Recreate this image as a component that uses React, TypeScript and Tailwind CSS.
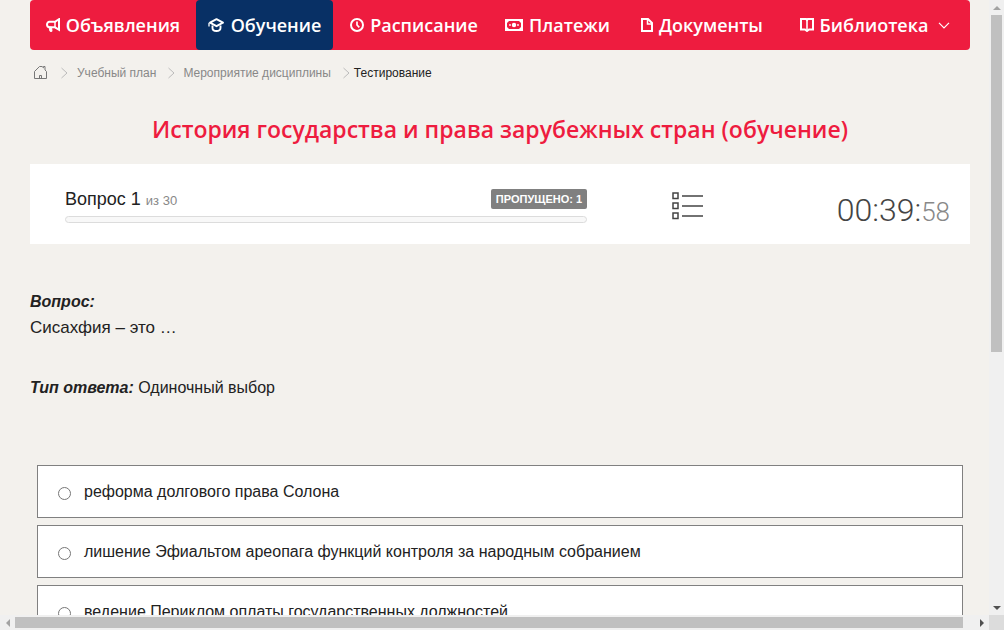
import React from 'react';

type IconProps = { className?: string };

function MegaphoneIcon() {
  return (
    <svg width="14" height="14" viewBox="0 0 14 14" fill="none" stroke="currentColor" strokeWidth="2">
      <path d="M13 1.200v10.600L9 9.300H3.500C2 9.300 1 8.300 1 6.600S2 3.800 3.500 3.800H9z" />
      <path d="M9 3.500v6" strokeWidth="1.500" />
      <path d="M3 9l1 4.300h2L5.500 9z" fill="currentColor" strokeWidth="1" />
    </svg>
  );
}

function GraduationIcon() {
  return (
    <svg width="17" height="14" viewBox="0 0 17 14" fill="none" stroke="currentColor" strokeWidth="1.900">
      <path d="M8.500 1.200L15 4.700 8.500 8.200 2 4.700z" strokeLinejoin="round" />
      <path d="M4.500 7.500v2.500c0 1.800 1.500 3 4 3s4-1.200 4-3V7.500" />
      <path d="M1 4.700v3.800" strokeWidth="1.300" />
    </svg>
  );
}

function ClockIcon() {
  return (
    <svg width="14" height="14" viewBox="0 0 14 14" fill="none" stroke="currentColor" strokeWidth="2">
      <circle cx="7" cy="7" r="6" />
      <path d="M7 3.500V7l2.300 2.300" strokeWidth="1.700" />
    </svg>
  );
}

function MoneyIcon() {
  return (
    <svg width="18" height="12" viewBox="0 0 18 12" fill="currentColor">
      <path fillRule="evenodd" d="M0 0h18v12H0zM4 2 2 4v4l2 2h10l2-2V4l-2-2z" />
      <circle cx="9" cy="6" r="2.200" />
      <circle cx="5" cy="6" r="0.900" />
      <circle cx="13" cy="6" r="0.900" />
    </svg>
  );
}

function DocumentIcon() {
  return (
    <svg width="12" height="14" viewBox="0 0 12 14" fill="none" stroke="currentColor" strokeWidth="2">
      <path d="M1 1h6l4 4v8H1z" />
      <path d="M6.500 1v5H11" strokeWidth="1.500" />
    </svg>
  );
}

function BookIcon() {
  return (
    <svg width="14" height="14" viewBox="0 0 14 14" fill="none" stroke="currentColor" strokeWidth="2">
      <path d="M1 1h5l1 1 1-1h5v10.500H9L7 13l-2-1.500H1z" />
      <path d="M7 2v11" strokeWidth="1.600" />
    </svg>
  );
}

function HomeIcon() {
  return (
    <svg width="13" height="13" viewBox="0 0 13 13" fill="none" stroke="#777" strokeWidth="1">
      <path d="M.5 5.500v7h12V5.500L11 4V.5H9.500v1.300L8 .5H5.500zM5.500 12.500v-3h2v3" />
    </svg>
  );
}

function Chevron({ className }: IconProps) {
  return (
    <svg className={className} width="7" height="12" viewBox="0 0 7 12" fill="none" stroke="#bbb" strokeWidth="1">
      <path d="M.5 1l5.500 5L.5 11" />
    </svg>
  );
}

function DownIcon() {
  return (
    <svg className="ml-1" width="12" height="7" viewBox="0 0 12 7" fill="none" stroke="currentColor" strokeWidth="1.200">
      <path d="M1 .8l5 5 5-5" />
    </svg>
  );
}

function ListIcon() {
  return (
    <svg width="31" height="28" viewBox="0 0 31 28" fill="none" stroke="#444" strokeWidth="1.500">
      <path d="M1 1h5v5.500H1zM1 11h5v5.500H1zM1 21h5v5.500H1zM10 4h21M10 14h21M10 24h21" />
    </svg>
  );
}

const sections = [
  { label: 'Объявления', icon: <MegaphoneIcon /> },
  { label: 'Обучение', icon: <GraduationIcon />, active: true },
  { label: 'Расписание', icon: <ClockIcon /> },
  { label: 'Платежи', icon: <MoneyIcon /> },
  { label: 'Документы', icon: <DocumentIcon /> },
  { label: 'Библиотека', icon: <BookIcon />, menu: true },
];

const answers = [
  'реформа долгового права Солона',
  'лишение Эфиальтом ареопага функций контроля за народным собранием',
  'ведение Периклом оплаты государственных должностей',
];

export default function App() {
  return (
    <div className="grid h-screen grid-cols-[minmax(0,1fr)_15px] grid-rows-[minmax(0,1fr)_15px] bg-[#f3f1ed] font-['Liberation_Sans',Arial,sans-serif] text-[#222]">
      <main className="overflow-hidden pr-[19px] pl-[30px]">
        <nav className="grid h-[50px] grid-cols-[166fr_137fr_162fr_125fr_164fr_182fr_4px] overflow-hidden rounded bg-[#ee1c3f] font-['Open_Sans',sans-serif] text-lg font-semibold text-white">
          {sections.map((s) => (
            <a
              key={s.label}
              href="#"
              className={
                s.active
                  ? 'flex items-center justify-center gap-1.5 rounded bg-[#083065] whitespace-nowrap'
                  : 'flex items-center justify-center gap-1.5 whitespace-nowrap'
              }
            >
              {s.icon}
              <span>{s.label}</span>
              {s.menu && <DownIcon />}
            </a>
          ))}
        </nav>

        <nav className="flex h-[45px] items-center pl-1 text-xs text-[#888]">
          <a href="#" aria-label="Главная">
            <HomeIcon />
          </a>
          <Chevron className="mr-[9px] ml-3.5" />
          <a href="#">Учебный план</a>
          <Chevron className="mr-2 ml-3" />
          <a href="#">Мероприятие дисциплины</a>
          <Chevron className="mr-1 ml-3" />
          <span className="text-[#222]">Тестирование</span>
        </nav>

        <h1 className="mt-4 text-center font-['Open_Sans',sans-serif] text-[23px] leading-9 font-semibold text-[#ee1c3f]">
          История государства и права зарубежных стран (обучение)
        </h1>

        <section className="mt-[17px] flex h-20 bg-white pr-5 pl-[35px]">
          <div className="w-[59%] pt-6">
            <div className="flex h-[22px] items-center justify-between">
              <p className="text-lg">
                Вопрос 1 <span className="text-[13px] text-[#888]">из 30</span>
              </p>
              <span className="rounded-xs bg-[#808080] px-[5px] text-[11px] leading-5 font-bold text-white">
                ПРОПУЩЕНО: 1
              </span>
            </div>
            <div className="mt-1.5 h-[7px] rounded-full border border-[#dcdcdc] bg-[#f8f8f8]" />
          </div>
          <div className="flex flex-1 items-start justify-between pt-7">
            <button type="button" aria-label="Список вопросов" className="ml-[85px]">
              <ListIcon />
            </button>
            <p className="font-['Roboto',sans-serif] text-[32px] leading-9 font-light text-[#444]">
              00:39:<span className="text-[26px] text-[#888]">58</span>
            </p>
          </div>
        </section>

        <section className="mt-[45px] text-base leading-[26px]">
          <h2 className="font-bold italic">Вопрос:</h2>
          <p className="text-[17px]">Сисахфия – это …</p>
          <p className="mt-[34px]">
            <strong className="italic">Тип ответа:</strong> Одиночный выбор
          </p>
        </section>

        <form className="mt-16 flex flex-col gap-[7px] px-[7px]">
          {answers.map((a) => (
            <label key={a} className="flex h-[53px] shrink-0 items-center border border-[#808080] bg-white pl-5 text-base">
              <input type="radio" name="answer" className="mt-1 mr-[13px] size-[13px]" />
              {a}
            </label>
          ))}
        </form>
      </main>

      <div className="flex flex-col items-center bg-[#f0f0f0]" aria-hidden="true">
        <div className="flex h-[15px] items-center">
          <svg width="8" height="4" viewBox="0 0 8 4" fill="#a3a3a3"><path d="M0 4l4-4 4 4z" /></svg>
        </div>
        <div className="w-full flex-1 px-0.5">
          <div className="h-[57.6%] bg-[#c0c0c0]" />
        </div>
        <div className="flex h-[15px] items-center">
          <svg width="8" height="4" viewBox="0 0 8 4" fill="#505050"><path d="M0 0h8L4 4z" /></svg>
        </div>
      </div>
      <div className="flex items-center bg-[#f0f0f0]" aria-hidden="true">
        <div className="flex w-[15px] justify-center">
          <svg width="4" height="8" viewBox="0 0 4 8" fill="#a3a3a3"><path d="M4 0v8L0 4z" /></svg>
        </div>
        <div className="h-full flex-1 py-0.5">
          <div className="h-full w-[98.9%] bg-[#c0c0c0]" />
        </div>
        <div className="flex w-[15px] justify-center">
          <svg width="4" height="8" viewBox="0 0 4 8" fill="#505050"><path d="M0 0v8l4-4z" /></svg>
        </div>
      </div>
      <div className="bg-[#dcdcdc]" />
    </div>
  );
}
